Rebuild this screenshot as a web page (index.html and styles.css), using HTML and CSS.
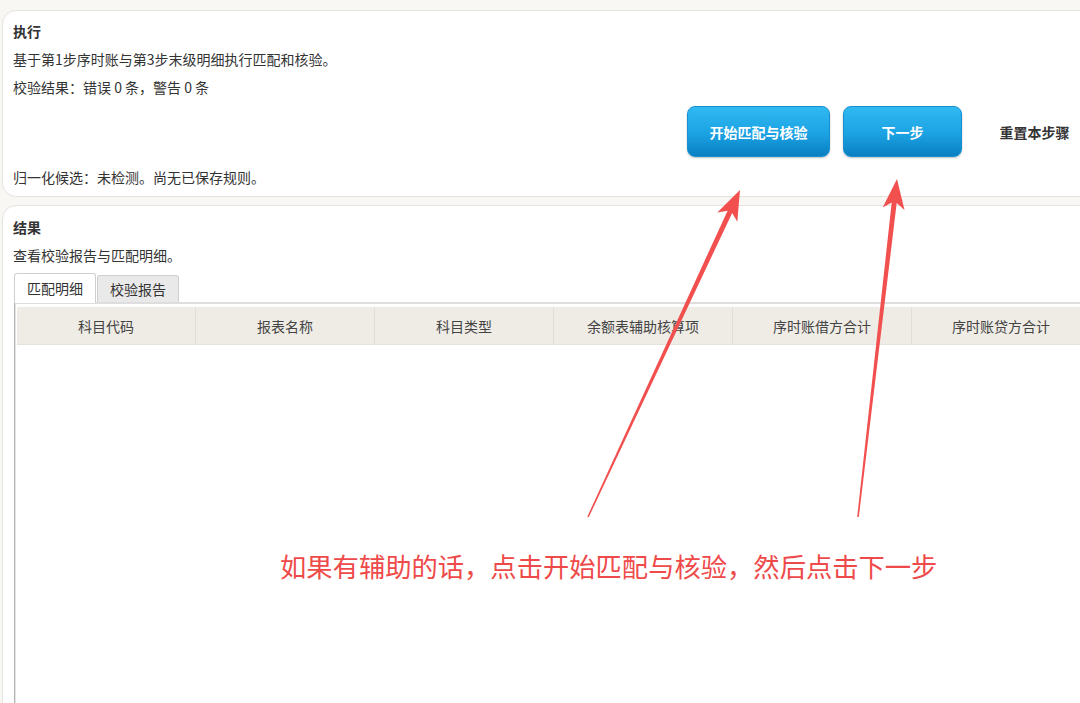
FILE: index.html
```html
<!DOCTYPE html>
<html lang="zh-CN">
<head>
<meta charset="utf-8">
<title>执行与结果</title>
<link rel="stylesheet" href="styles.css">
</head>
<body>
<div class="page">
  <section class="card card-exec">
    <h2 class="title">执行</h2>
    <p class="line">基于第1步序时账与第3步末级明细执行匹配和核验。</p>
    <p class="line">校验结果：错误 0 条，警告 0 条</p>
    <div class="actions">
      <button class="btn btn-primary btn-wide">开始匹配与核验</button>
      <button class="btn btn-primary">下一步</button>
      <button class="btn btn-plain">重置本步骤</button>
    </div>
    <p class="line line-last">归一化候选：未检测。尚无已保存规则。</p>
  </section>
  <section class="card card-result">
    <h2 class="title">结果</h2>
    <p class="line">查看校验报告与匹配明细。</p>
    <div class="tabs">
      <div class="tab tab-active">匹配明细</div>
      <div class="tab">校验报告</div>
    </div>
    <div class="table-wrap">
      <div class="thead">
        <div class="th">科目代码</div>
        <div class="th">报表名称</div>
        <div class="th">科目类型</div>
        <div class="th">余额表辅助核算项</div>
        <div class="th">序时账借方合计</div>
        <div class="th">序时账贷方合计</div>
      </div>
    </div>
  </section>
</div>
<svg class="overlay" width="1080" height="703" viewBox="0 0 1080 703" xmlns="http://www.w3.org/2000/svg">
  <polygon fill="#f24f4f" points="587.3,516.7 727.6,210.7 717.3,212.6 740,190 737.3,221.8 732.2,212.9 588.7,517.3"/>
  <polygon fill="#f24f4f" points="857.2,516.9 891.7,202.5 882.7,207.5 897,179 904.5,210.1 896.7,203.1 858.8,517.1"/>
</svg>
<div class="note">如果有辅助的话，点击开始匹配与核验，然后点击下一步</div>
</body>
</html>
```
FILE: styles.css
```css
* { box-sizing: border-box; }
html, body {
  margin: 0;
  padding: 0;
  width: 1080px;
  height: 703px;
  overflow: hidden;
  background: #f9f7f4;
  font-family: "Noto Sans CJK SC", "Noto Sans", sans-serif;
  color: #333;
}
.page {
  padding: 10px 0 0 2px;
  width: 1105px;
  display: flex;
  flex-direction: column;
  gap: 8px;
}
.card {
  background: #fff;
  border: 1px solid #e6e3de;
  border-radius: 14px;
  padding: 6px 10px 5px 10px;
  width: 1103px;
}
.title {
  margin: 0;
  font-size: 14px;
  font-weight: 700;
  line-height: 28px;
  color: #333;
}
.line {
  margin: 0;
  font-size: 14px;
  line-height: 28px;
  color: #333;
}
.actions {
  display: flex;
  justify-content: flex-end;
  gap: 13px;
  margin-top: 5px;
}
.btn {
  height: 51px;
  width: 119px;
  font-family: inherit;
  font-size: 14px;
  font-weight: 700;
  border-radius: 8px;
  cursor: pointer;
}
.btn-wide { width: 143px; }
.btn-primary {
  color: #fff;
  border: 1px solid #1790d2;
  background: linear-gradient(to bottom, #31b9f1 0%, #1ba2e3 55%, #0a7fc1 100%);
  box-shadow: 0 1px 2px rgba(0, 0, 0, 0.25);
}
.btn-plain {
  background: transparent;
  border: none;
  color: #333;
}
.line-last { margin-top: 6px; }
.card-result {
  height: 520px;
  padding-top: 7px;
}
.tabs {
  display: flex;
  align-items: flex-end;
  margin-top: 3px;
  margin-left: 1px;
  height: 30px;
}
.tab {
  height: 27px;
  padding: 0 12px;
  font-size: 14px;
  line-height: 26px;
  color: #333;
  background: #e9e9e9;
  border: 1px solid #cfcfcf;
  border-bottom: none;
  border-radius: 3px 3px 0 0;
  margin-left: 1px;
}
.tab-active {
  height: 30px;
  line-height: 29px;
  background: #fff;
  margin-left: 0;
  padding: 0 12px;
  position: relative;
  top: 1px;
}
.table-wrap {
  margin-left: 1px;
  border-top: 2px solid #dedede;
  border-left: 1px solid #b3b3b3;
  box-shadow: inset 1px 0 0 #e4e4e4;
  padding: 3px 0 0 2px;
  height: 420px;
}
.thead {
  display: flex;
  background: #efece6;
  height: 38px;
  border-bottom: 1px solid #e6e3dc;
}
.th {
  width: 179px;
  flex: none;
  text-align: center;
  font-size: 14px;
  line-height: 38px;
  color: #444;
  border-right: 1px solid #e0ddd6;
}
.overlay {
  position: absolute;
  left: 0;
  top: 0;
  pointer-events: none;
}
.note {
  position: absolute;
  left: 280px;
  top: 548px;
  font-size: 26.3px;
  line-height: 36px;
  color: #ef4a4a;
  white-space: nowrap;
}
```
